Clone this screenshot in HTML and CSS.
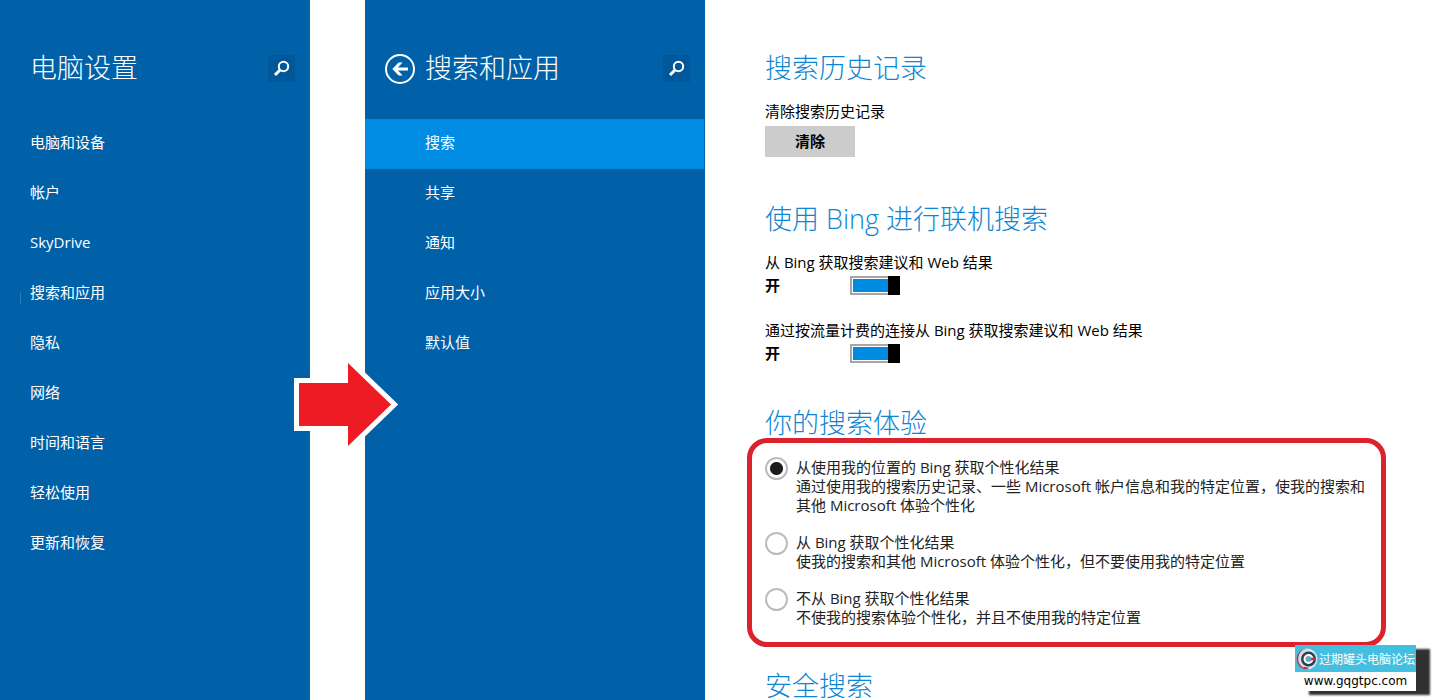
FILE: index.html
```html
<!DOCTYPE html>
<html lang="zh-CN">
<head>
<meta charset="utf-8">
<title>电脑设置</title>
<link rel="stylesheet" href="styles.css">
</head>
<body>
<div class="layout">
  <aside class="panel panel-root">
    <header class="panel-header">
      <h1 class="panel-title">电脑设置</h1>
      <button class="search-button" type="button" aria-label="搜索设置">
        <svg viewBox="0 0 27 27" width="27" height="27" aria-hidden="true"><circle cx="15.500" cy="11.500" r="4.700"/><path d="M12 15L7 20" class="handle"/></svg>
      </button>
    </header>
    <nav class="menu">
      <a href="#devices">电脑和设备</a>
      <a href="#accounts">帐户</a>
      <a href="#skydrive">SkyDrive</a>
      <a href="#search" class="marked">搜索和应用</a>
      <a href="#privacy">隐私</a>
      <a href="#network">网络</a>
      <a href="#time">时间和语言</a>
      <a href="#ease">轻松使用</a>
      <a href="#update">更新和恢复</a>
    </nav>
  </aside>

  <aside class="panel panel-sub">
    <header class="panel-header">
      <button class="back-button" type="button" aria-label="返回">
        <svg viewBox="0 0 30 30" width="30" height="30" aria-hidden="true"><circle cx="15" cy="15" r="14"/><path d="M23 13.400H13L17.600 8.500H13.600L7.300 15L13.600 21.500H17.600L13 16.600H23Z" class="shape"/></svg>
      </button>
      <h1 class="panel-title">搜索和应用</h1>
      <button class="search-button" type="button" aria-label="搜索设置">
        <svg viewBox="0 0 27 27" width="27" height="27" aria-hidden="true"><circle cx="15.500" cy="11.500" r="4.700"/><path d="M12 15L7 20" class="handle"/></svg>
      </button>
    </header>
    <nav class="menu">
      <a href="#s" class="selected" aria-current="page">搜索</a>
      <a href="#share">共享</a>
      <a href="#notify">通知</a>
      <a href="#size">应用大小</a>
      <a href="#defaults">默认值</a>
    </nav>
  </aside>

  <main class="content">
    <section class="history">
      <h2>搜索历史记录</h2>
      <p class="caption" id="clear-label">清除搜索历史记录</p>
      <button class="clear-button" type="button" aria-describedby="clear-label">清除</button>
    </section>

    <section class="online">
      <h2>使用 Bing 进行联机搜索</h2>
      <div class="setting">
        <label class="caption" for="suggest">从 Bing 获取搜索建议和 Web 结果</label>
        <div class="switch-row"><span class="state">开</span><input class="switch" type="checkbox" role="switch" id="suggest" checked></div>
      </div>
      <div class="setting">
        <label class="caption" for="metered">通过按流量计费的连接从 Bing 获取搜索建议和 Web 结果</label>
        <div class="switch-row"><span class="state">开</span><input class="switch" type="checkbox" role="switch" id="metered" checked></div>
      </div>
    </section>

    <section class="experience">
      <h2>你的搜索体验</h2>
      <div class="options" role="radiogroup" aria-label="你的搜索体验">
        <label class="option"><input type="radio" name="exp" checked><span>从使用我的位置的 Bing 获取个性化结果<br>通过使用我的搜索历史记录、一些 Microsoft 帐户信息和我的特定位置，使我的搜索和其他 Microsoft 体验个性化</span></label>
        <label class="option"><input type="radio" name="exp"><span>从 Bing 获取个性化结果<br>使我的搜索和其他 Microsoft 体验个性化，但不要使用我的特定位置</span></label>
        <label class="option"><input type="radio" name="exp"><span>不从 Bing 获取个性化结果<br>不使我的搜索体验个性化，并且不使用我的特定位置</span></label>
      </div>
    </section>

    <section>
      <h2>安全搜索</h2>
    </section>
  </main>

  <svg class="arrow" viewBox="0 0 110 96" width="110" height="96" aria-hidden="true">
    <path class="arrow-edge" d="M9 27H58V7L101 48.500L58 90V70H9Z"/>
    <path class="arrow-fill" d="M9 27H58V7L101 48.500L58 90V70H9Z"/>
  </svg>

  <div class="forum-badge">
    <div class="forum-name">
      <svg viewBox="0 0 24 24" width="24" height="24" aria-hidden="true">
        <circle cx="12" cy="12" r="10.500" fill="#d8e4ec"/>
        <path d="M12 1.500A10.500 10.500 0 0 0 12 22.500L14 20.500A9 9 0 0 1 12 1.500Z" fill="#a3384d"/>
        <path d="M12 3A9 9 0 0 0 9 20" fill="none" stroke="#e3cbd4" stroke-width="1.500"/>
        <circle cx="13.500" cy="12" r="7.500" fill="#263f52"/>
        <circle cx="13.500" cy="12" r="4" fill="#68a9bd" stroke="#fff" stroke-width="2"/>
        <path d="M16 12H21" stroke="#b73549" stroke-width="2.500"/>
      </svg>
      <span>过期罐头电脑论坛</span>
    </div>
    <div class="forum-url">www.gqgtpc.com</div>
  </div>
</div>
</body>
</html>
```
FILE: styles.css
```css
* { box-sizing: border-box; }
body {
  margin: 0;
  background: #fff;
  color: #000;
  font: 15px/20px "Open Sans", "Noto Sans CJK SC", sans-serif;
}
h1, h2, p { margin: 0; }
button { border: 0; padding: 0; font: inherit; }
.layout {
  position: relative;
  display: flex;
  min-height: 100vh;
}
.panel {
  flex: none;
  background: #0061a9;
  color: #fff;
}
.panel-root { width: 310px; margin-right: 55px; }
.panel-sub { width: 340px; padding-right: 1px; }
.panel-header {
  display: flex;
  align-items: flex-start;
  height: 119px;
  padding: 54px 15px 0 30px;
}
.panel-sub .panel-header { padding-left: 20px; padding-right: 14px; }
.panel-title, h2 {
  font-size: 27px;
  line-height: 28px;
  font-weight: 300;
}
.search-button {
  width: 27px;
  height: 27px;
  margin-top: 1px;
  margin-left: auto;
  background: #00589b;
}
.search-button svg, .back-button svg { display: block; fill: none; stroke: #fff; stroke-width: 2; }
.search-button .handle { stroke-width: 3; }
.back-button { margin-right: 10px; background: none; }
.back-button .shape { fill: #fff; stroke: none; }
.menu { display: flex; flex-direction: column; }
.menu a {
  position: relative;
  height: 50px;
  padding-left: 30px;
  color: inherit;
  line-height: 46px;
  text-decoration: none;
}
.panel-sub .menu a { padding-left: 60px; }
.menu .selected { background: #008ce2; }
.menu .marked::before {
  content: "";
  position: absolute;
  left: 20px;
  top: 23px;
  width: 1px;
  height: 12px;
  background: #2b7bbb;
}
.content {
  flex: 1;
  min-width: 0;
  padding: 54px 54px 0 60px;
}
h2 { color: #0f86d4; }
.caption { display: block; }
.history { margin-bottom: 48px; }
.history .caption { margin: 19px 0 5px; }
.clear-button {
  display: block;
  width: 90px;
  height: 31px;
  padding-bottom: 2px;
  background: #ccc;
  color: #000;
  font-weight: 700;
}
.online { margin-bottom: 46px; }
.online h2 { margin-bottom: 19px; }
.setting + .setting { margin-top: 25px; }
.switch-row { display: flex; align-items: center; margin-top: 3px; }
.state { width: 85px; font-weight: 700; }
.switch {
  appearance: none;
  position: relative;
  width: 50px;
  height: 19px;
  margin: 0;
  border: 2px solid #a6a6a6;
  background: #008ae0;
  box-shadow: inset 0 0 0 1px #fff;
}
.switch::after {
  content: "";
  position: absolute;
  top: -2px;
  right: -2px;
  width: 12px;
  height: 19px;
  background: #000;
}
.options {
  display: flex;
  flex-direction: column;
  gap: 18px;
  margin: 1px 0 25px -18px;
  padding: 15px 8px 15px 13px;
  border: 5px solid #dc222c;
  border-radius: 20px;
  color: #222;
  line-height: 19px;
}
.option { display: flex; align-items: flex-start; gap: 8px; }
.option input {
  appearance: none;
  flex: none;
  width: 23px;
  height: 23px;
  margin: -1px 0 0;
  border: 2px solid #bcbcbc;
  border-radius: 50%;
  background: #fff;
}
.option input:checked { background: radial-gradient(circle, #1c1c1c 6px, #fff 7px); }
.arrow { position: absolute; left: 290px; top: 356px; }
.arrow-edge { fill: #fff; stroke: #fff; stroke-width: 10; }
.arrow-fill { fill: #ed1c24; }
.forum-badge {
  position: absolute;
  right: 24px;
  bottom: 9px;
  width: 121px;
  background: #fff;
  box-shadow: 14px 4px 2px #303030;
  font-size: 12px;
}
.forum-name {
  display: flex;
  align-items: center;
  height: 27px;
  background: #45bfdf;
  color: #fff;
  white-space: nowrap;
}
.forum-name span { padding-top: 3px; }
.forum-url {
  font-family: "DejaVu Sans", sans-serif;
  line-height: 19px;
  text-align: center;
}
```
